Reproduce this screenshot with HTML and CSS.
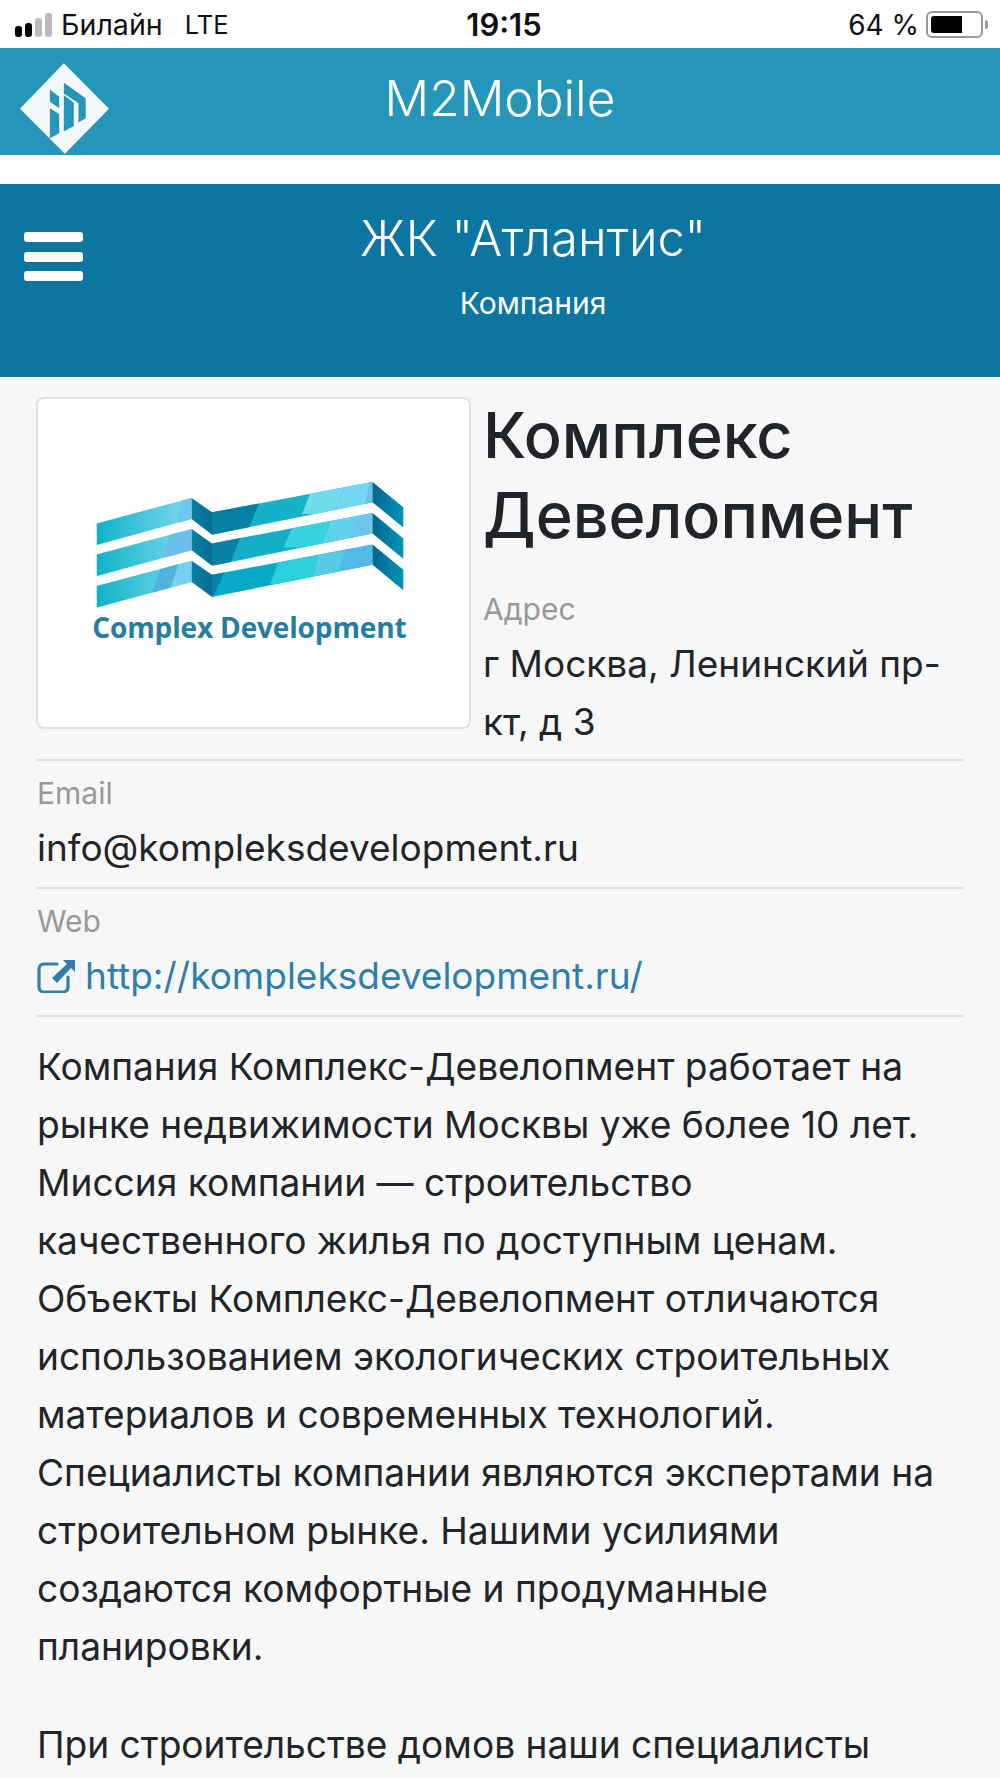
FILE: index.html
```html
<!DOCTYPE html>
<html lang="ru">
<head>
    <meta charset="UTF-8">
    <meta name="viewport" content="width=device-width, initial-scale=1.0">
    <title>Комплекс Девелопмент</title>
    <link rel="stylesheet" href="styles.css">
</head>
<body>
    <div class="status">
        <div class="status-left">
            <span class="signal"><i class="on b1"></i><i class="on b2"></i><i class="b3"></i><i class="b4"></i></span>
            <span>Билайн</span>
            <span class="lte">LTE</span>
        </div>
        <div class="status-time">19:15</div>
        <div class="status-right">
            <span>64 %</span>
            <span class="battery"><span class="battery-level"></span></span>
            <span class="battery-tip"></span>
        </div>
    </div>

    <div class="topbar">
        <svg class="m2-logo" viewBox="15 15 268 273">
            <polygon points="15,152 147,15 283,152 150,288" fill="#f3f8fb"/>
            <polygon points="105,94 133,116 133,151 105,131" fill="#2596b9"/>
            <polygon points="105,151 133,168 133,226 105,241" fill="#2596b9"/>
            <polygon points="147,74 213,121 213,181 191,194 191,136 147,106" fill="#2596b9"/>
            <polygon points="147,111 177,134 177,204 147,221" fill="#2596b9"/>
        </svg>
        <div class="topbar-title">M2Mobile</div>
    </div>

    <div class="section-head">
        <div class="burger"><i></i><i></i><i></i></div>
        <h1>ЖК "Атлантис"</h1>
        <div class="section-sub">Компания</div>
    </div>

    <div class="content">
        <div class="company">
            <div class="logo-card">
                <svg class="cd-logo" viewBox="56 56 1288 981">
                    <defs>
                        <linearGradient id="fold" x1="0" y1="0" x2="1" y2="0">
                            <stop offset="0" stop-color="#05658a"/>
                            <stop offset="1" stop-color="#0095bb"/>
                        </linearGradient>
                        <linearGradient id="foldMid" x1="0" y1="0" x2="1" y2="0">
                            <stop offset="0" stop-color="#0a7ea3"/>
                            <stop offset="1" stop-color="#066d90"/>
                        </linearGradient>
                        <linearGradient id="left" gradientUnits="userSpaceOnUse" x1="230" y1="0" x2="515" y2="0">
                            <stop offset="0" stop-color="#10b2c8"/>
                            <stop offset="1" stop-color="#80d9ee"/>
                        </linearGradient>
                        <clipPath id="r1a"><polygon points="230,428 515,352 515,415 230,493"/></clipPath>
                        <clipPath id="r1b"><polygon points="576,395 1056,304 1056,365 576,462"/></clipPath>
                        <clipPath id="r2a"><polygon points="230,521 515,445 515,508 230,586"/></clipPath>
                        <clipPath id="r2b"><polygon points="576,488 1056,397 1056,458 576,555"/></clipPath>
                        <clipPath id="r3a"><polygon points="230,615 515,540 515,603 230,680"/></clipPath>
                        <clipPath id="r3b"><polygon points="576,582 1056,491 1056,552 576,648"/></clipPath>
                    </defs>

                    <g clip-path="url(#r1a)">
                        <rect x="230" y="300" width="290" height="220" fill="url(#left)"/>
                        <polygon points="490,340 520,340 520,430 470,430" fill="#6cc6ee"/>
                    </g>
                    <polygon points="515,352 576,395 576,462 515,415" fill="url(#foldMid)"/>
                    <g clip-path="url(#r1b)">
                        <rect x="570" y="300" width="490" height="170" fill="#17b1c9"/>
                        <polygon points="570,380 720,360 675,470 570,470" fill="#0880a5"/>
                        <polygon points="885,300 980,300 940,400 845,400" fill="#70dbe9"/>
                        <polygon points="980,300 1060,300 1060,400 940,400" fill="#74d6f1"/>
                        <polygon points="1048,300 1060,300 1060,400 1028,400" fill="#67c2ee"/>
                    </g>
                    <polygon points="1056,304 1148,380 1148,440 1056,365" fill="url(#fold)"/>

                    <g clip-path="url(#r2a)">
                        <rect x="230" y="400" width="290" height="200" fill="url(#left)"/>
                        <polygon points="460,420 520,420 520,530 430,530" fill="#6bbfe9"/>
                    </g>
                    <polygon points="515,445 576,488 576,555 515,508" fill="url(#foldMid)"/>
                    <g clip-path="url(#r2b)">
                        <rect x="570" y="390" width="490" height="170" fill="#14afc6"/>
                        <polygon points="570,470 665,460 625,560 570,560" fill="#0880a5"/>
                        <polygon points="835,400 940,400 900,500 790,500" fill="#39d2e0"/>
                        <polygon points="940,400 1015,400 975,500 900,500" fill="#62d2ea"/>
                        <polygon points="1015,390 1060,390 1060,500 975,500" fill="#6ac6ef"/>
                    </g>
                    <polygon points="1056,397 1148,473 1148,534 1056,458" fill="url(#fold)"/>

                    <g clip-path="url(#r3a)">
                        <rect x="230" y="500" width="290" height="190" fill="url(#left)"/>
                        <polygon points="430,540 480,540 445,640 395,640" fill="#4eb4dd"/>
                        <polygon points="480,540 520,540 520,640 445,640" fill="#78cff0"/>
                    </g>
                    <polygon points="515,540 576,582 576,648 515,603" fill="url(#foldMid)"/>
                    <g clip-path="url(#r3b)">
                        <rect x="570" y="480" width="490" height="170" fill="#05abc4"/>
                        <polygon points="570,570 615,570 578,650 570,650" fill="#0880a5"/>
                        <polygon points="790,500 900,500 870,610 750,610" fill="#2bd0de"/>
                        <polygon points="900,500 980,500 945,600 870,610" fill="#55cbe6"/>
                        <polygon points="980,490 1060,490 1060,600 945,600" fill="#53b9e6"/>
                    </g>
                    <polygon points="1056,491 1148,567 1148,628 1056,552" fill="url(#fold)"/>

                    <text class="cd-name" x="218" y="770" textLength="940">Complex Development</text>
                </svg>
            </div>
            <div class="company-info">
                <h2>Комплекс Девелопмент</h2>
                <div class="label address-label">Адрес</div>
                <div class="value">г Москва, Ленинский пр-кт, д 3</div>
            </div>
        </div>

        <div class="row">
            <div class="label">Email</div>
            <div class="value">info@kompleksdevelopment.ru</div>
        </div>

        <div class="row">
            <div class="label">Web</div>
            <a class="value link" href="#">
                <svg class="ext-icon" viewBox="0 0 40 34">
                    <path d="M20 5H7a5 5 0 0 0-5 5v18a5 5 0 0 0 5 5h19a5 5 0 0 0 5-5v-10" fill="none" stroke="#2f7fac" stroke-width="3.2" stroke-linecap="round"/>
                    <path d="M26 1h12v12l-4-4-14 15-5-5 15-14z" fill="#2f7fac"/>
                </svg>http://kompleksdevelopment.ru/
            </a>
        </div>

        <div class="about">
            <p>Компания Комплекс-Девелопмент работает на рынке недвижимости Москвы уже более 10 лет. Миссия компании — строительство качественного жилья по доступным ценам. Объекты Комплекс-Девелопмент отличаются использованием экологических строительных материалов и современных технологий. Специалисты компании являются экспертами на строительном рынке. Нашими усилиями создаются комфортные и продуманные планировки.</p>
            <p>При строительстве домов наши специалисты</p>
        </div>
    </div>
</body>
</html>
```

FILE: styles.css
```css
* {
    box-sizing: border-box;
}

html, body {
    height: 1778px;
    overflow: hidden;
}

body {
    margin: 0;
    background-color: white;
    color: #212529;
    font-family: Inter, "Noto Sans", sans-serif;
    display: flex;
    flex-direction: column;
}

.status {
    height: 48px;
    flex-shrink: 0;
    color: #111;
    display: grid;
    grid-template-columns: 1fr auto 1fr;
    align-items: center;
    padding: 1px 12px 0 15px;
    font-size: 28.6px;
}

.status-left {
    display: flex;
    align-items: center;
    gap: 9px;
}

.lte {
    margin-left: 13px;
    font-size: 25.5px;
}

.signal {
    display: flex;
    align-items: flex-end;
    gap: 3px;
    height: 24px;
}

.signal i {
    width: 7px;
    border-radius: 3px;
    background-color: #bbb;
}

.signal i.on {
    background-color: black;
}

.b1 { height: 11px; }
.b2 { height: 14px; }
.b3 { height: 19px; }
.b4 { height: 24px; }

.status-time {
    margin-left: 5px;
    font-size: 31px;
    font-weight: 600;
}

.status-right {
    display: flex;
    align-items: center;
    justify-content: flex-end;
    font-size: 28px;
}

.battery {
    width: 57px;
    height: 27px;
    margin-left: 7px;
    padding: 3px;
    border: 2px solid #999;
    border-radius: 6px;
}

.battery-level {
    display: block;
    width: 31px;
    height: 100%;
    background-color: black;
    border-radius: 3px 0 0 3px;
}

.battery-tip {
    width: 3px;
    height: 9px;
    margin-left: 2px;
    background-color: #999;
    border-radius: 0 3px 3px 0;
}

.topbar {
    height: 107px;
    flex-shrink: 0;
    background-color: #2596b9;
    display: flex;
    justify-content: center;
    align-items: center;
    position: relative;
}

.m2-logo {
    position: absolute;
    left: 20px;
    top: 15px;
    width: 89px;
    height: 91px;
}

.topbar-title {
    color: white;
    font-size: 49.6px;
    font-weight: 300;
    margin-bottom: 8px;
}

.section-head {
    height: 193px;
    flex-shrink: 0;
    margin-top: 29px;
    background-color: #0c75a0;
    color: white;
    text-align: center;
    padding-top: 25px;
    padding-left: 66px;
    position: relative;
}

.section-head h1 {
    margin: 0;
    font-size: 49px;
    font-weight: 300;
    line-height: 60px;
}

.section-sub {
    font-size: 30px;
    margin-top: 14px;
    line-height: 40px;
}

.burger {
    position: absolute;
    left: 24px;
    top: 48px;
}

.burger i {
    display: block;
    width: 59px;
    height: 10px;
    margin-bottom: 9.5px;
    background-color: white;
    border-radius: 3px;
}

.content {
    flex: 1;
    background-color: #f7f7f7;
    padding: 20px 36px 0 37px;
}

.company {
    display: flex;
    gap: 12px;
    margin-bottom: 8px;
}

.logo-card {
    width: 435px;
    height: 332px;
    flex-shrink: 0;
    margin-left: -1px;
    background-color: white;
    border: 2px solid #dee2e6;
    border-radius: 8px;
    overflow: hidden;
}

.cd-logo {
    display: block;
    width: 431px;
    height: 328px;
}

.cd-name {
    font-family: "Open Sans", sans-serif;
    font-weight: 700;
    font-size: 84px;
    fill: #257ea0;
}

.company-info h2 {
    margin: -2px 0 0;
    font-size: 63px;
    font-weight: 500;
    line-height: 80px;
}

.address-label {
    margin-top: 34px;
}

.label {
    color: #999;
    font-size: 30px;
    line-height: 40px;
    margin-bottom: 6px;
}

.value {
    font-size: 37px;
    line-height: 58px;
}

.row {
    border-top: 2px solid #dee2e6;
    padding-top: 12px;
    height: 128px;
}

.link {
    display: flex;
    align-items: center;
    color: #2f7fac;
    text-decoration: none;
}

.ext-icon {
    width: 40px;
    height: 34px;
    margin-right: 8px;
}

.about {
    border-top: 2px solid #dee2e6;
    padding-top: 21px;
}

.about p {
    margin: 0 0 40px;
    font-size: 37.1px;
    line-height: 58px;
}
```
